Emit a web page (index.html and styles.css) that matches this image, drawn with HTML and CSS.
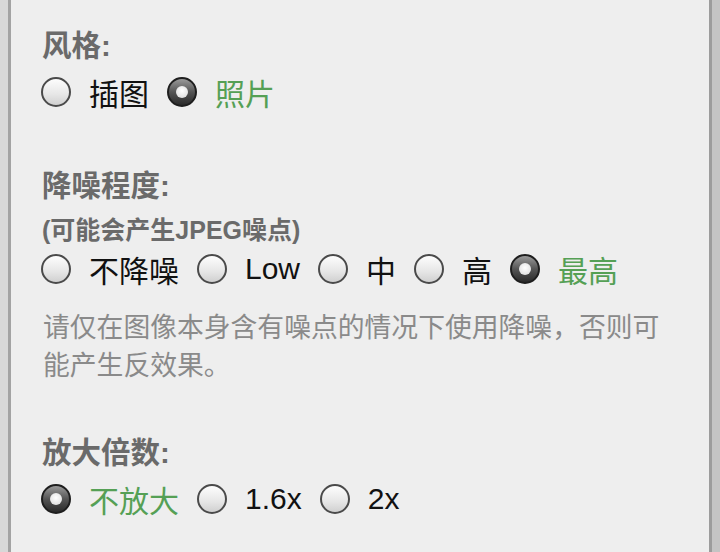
FILE: index.html
```html
<!DOCTYPE html>
<html lang="zh-CN">
<head>
<meta charset="utf-8">
<link rel="stylesheet" href="styles.css">
</head>
<body>
<div class="frame">
  <div class="panel">
    <section class="group g-style">
      <div class="heading">风格:</div>
      <div class="options">
        <label class="opt"><span class="radio"></span><span class="text">插图</span></label>
        <label class="opt on"><span class="radio"></span><span class="text">照片</span></label>
      </div>
    </section>
    <section class="group g-noise">
      <div class="heading">降噪程度:</div>
      <div class="sub">(可能会产生JPEG噪点)</div>
      <div class="options">
        <label class="opt"><span class="radio"></span><span class="text">不降噪</span></label>
        <label class="opt"><span class="radio"></span><span class="text">Low</span></label>
        <label class="opt"><span class="radio"></span><span class="text">中</span></label>
        <label class="opt"><span class="radio"></span><span class="text">高</span></label>
        <label class="opt on"><span class="radio"></span><span class="text">最高</span></label>
      </div>
      <p class="note">请仅在图像本身含有噪点的情况下使用降噪，否则可能产生反效果。</p>
    </section>
    <section class="group g-scale">
      <div class="heading">放大倍数:</div>
      <div class="options">
        <label class="opt on"><span class="radio"></span><span class="text">不放大</span></label>
        <label class="opt"><span class="radio"></span><span class="text">1.6x</span></label>
        <label class="opt"><span class="radio"></span><span class="text">2x</span></label>
      </div>
    </section>
  </div>
</div>
</body>
</html>
```
FILE: styles.css
```css
html, body {
  margin: 0;
  padding: 0;
  height: 100%;
}
body {
  background: #d6d6d6;
  font-family: "Liberation Sans", "Noto Sans CJK SC", sans-serif;
  overflow: hidden;
}
.frame {
  height: 100%;
  padding: 0 8px;
  background: linear-gradient(to right, #d8d8d8 0, #d8d8d8 8px, transparent 8px, transparent 712px, #c4c4c4 712px);
}
.panel {
  height: 100%;
  box-sizing: border-box;
  background: #eeeeee;
  border-left: 3px solid #a3a3a3;
  border-right: 3px solid #9c9c9c;
  padding: 28px 0 0 30px;
}
.group {
  display: flex;
  flex-direction: column;
}
.heading {
  font-size: 29.5px;
  font-weight: bold;
  color: #6a6a6a;
  line-height: 36px;
  padding-left: 1px;
}
.sub {
  font-size: 25px;
  font-weight: bold;
  color: #6a6a6a;
  line-height: 30px;
  margin-top: 11px;
  padding-left: 1px;
}
.options {
  display: flex;
  align-items: center;
  gap: 18px;
  margin-top: 8px;
  height: 40px;
}
.g-noise .options {
  margin-top: 4px;
}
.opt {
  display: flex;
  align-items: center;
  gap: 18px;
  font-size: 30px;
  color: #111;
}
.opt.on .text {
  color: #55a055;
}
.radio {
  width: 30px;
  height: 30px;
  box-sizing: border-box;
  border-radius: 50%;
  border: 2px solid #4a4a4a;
  background: linear-gradient(to bottom, #fdfdfd 0%, #e6e6e6 60%, #d0d0d0 100%);
  position: relative;
  flex: none;
}
.opt.on .radio {
  border-color: #1e1e1e;
  background: linear-gradient(to bottom, #9a9a9a 0%, #555 50%, #2a2a2a 100%);
}
.opt.on .radio::after {
  content: "";
  position: absolute;
  left: 50%;
  top: 50%;
  width: 12px;
  height: 12px;
  margin: -6px 0 0 -6px;
  border-radius: 50%;
  background: radial-gradient(circle at 50% 40%, #ffffff 0%, #e4e4e4 70%, #bdbdbd 100%);
}
.g-noise {
  margin-top: 56px;
}
.note {
  margin: 20px 0 0;
  padding-left: 2px;
  width: 630px;
  font-size: 26.8px;
  line-height: 38px;
  color: #8a8a8a;
}
.g-scale {
  margin-top: 50px;
}
```
